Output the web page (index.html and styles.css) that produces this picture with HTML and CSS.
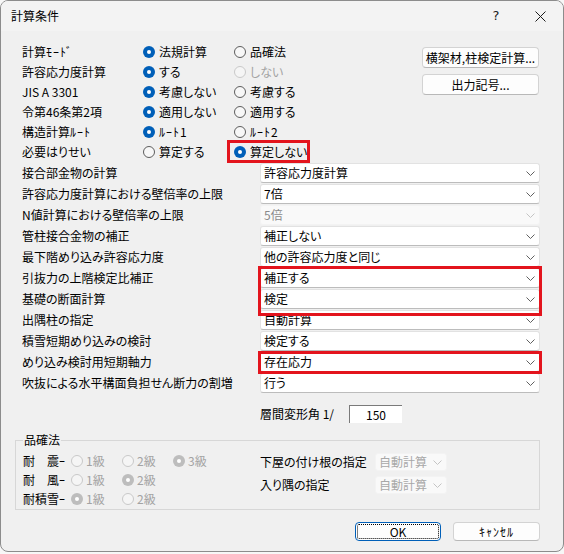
FILE: index.html
```html
<!DOCTYPE html>
<html lang="ja">
<head>
  <meta charset="UTF-8">
  <title>計算条件</title>
  <link rel="stylesheet" href="styles.css">
</head>
<body>

  <div class="dialog">
    <div class="titlebar">
      <span class="title">計算条件</span>
      <span class="caption-btn help">?</span>
      <span class="caption-btn">
        <svg width="11" height="11" viewBox="0 0 11 11"><path d="M0.5 0.5L10.5 10.5M10.5 0.5L0.5 10.5" stroke="#1b1b1b" stroke-width="1" fill="none"/></svg>
      </span>
    </div>

    <div class="content">
      <div class="mode-area">
        <div class="mode-grid">
          <span>計算<span class="hw">ﾓｰﾄﾞ</span></span>
          <span class="radio on"><i></i>法規計算</span>
          <span class="radio"><i></i>品確法</span>

          <span>許容応力度計算</span>
          <span class="radio on"><i></i>する</span>
          <span class="radio off"><i></i>しない</span>

          <span>JIS A 3301</span>
          <span class="radio on"><i></i>考慮しない</span>
          <span class="radio"><i></i>考慮する</span>

          <span>令第46条第2項</span>
          <span class="radio on"><i></i>適用しない</span>
          <span class="radio"><i></i>適用する</span>

          <span>構造計算<span class="hw">ﾙｰﾄ</span></span>
          <span class="radio on"><i></i><span class="hw">ﾙｰﾄ1</span></span>
          <span class="radio"><i></i><span class="hw">ﾙｰﾄ2</span></span>

          <span>必要はりせい</span>
          <span class="radio"><i></i>算定する</span>
          <span class="radio on marked"><i></i>算定しない</span>
        </div>

        <div class="side-buttons">
          <button class="btn">横架材,柱検定計算...</button>
          <button class="btn">出力記号...</button>
        </div>
      </div>

      <div class="combo-grid">
        <span>接合部金物の計算</span>
        <div class="combo">許容応力度計算<svg width="9" height="5" viewBox="0 0 9 5"><path d="M0.5 0.5L4.5 4.5L8.5 0.5" fill="none" stroke="#606060"/></svg></div>

        <span>許容応力度計算における壁倍率の上限</span>
        <div class="combo">7倍<svg width="9" height="5" viewBox="0 0 9 5"><path d="M0.5 0.5L4.5 4.5L8.5 0.5" fill="none" stroke="#606060"/></svg></div>

        <span>N値計算における壁倍率の上限</span>
        <div class="combo off">5倍<svg width="9" height="5" viewBox="0 0 9 5"><path d="M0.5 0.5L4.5 4.5L8.5 0.5" fill="none" stroke="#c4c4c4"/></svg></div>

        <span>管柱接合金物の補正</span>
        <div class="combo">補正しない<svg width="9" height="5" viewBox="0 0 9 5"><path d="M0.5 0.5L4.5 4.5L8.5 0.5" fill="none" stroke="#606060"/></svg></div>

        <span>最下階めり込み許容応力度</span>
        <div class="combo">他の許容応力度と同じ<svg width="9" height="5" viewBox="0 0 9 5"><path d="M0.5 0.5L4.5 4.5L8.5 0.5" fill="none" stroke="#606060"/></svg></div>

        <span>引抜力の上階検定比補正</span>
        <div class="combo mark-pair">補正する<svg width="9" height="5" viewBox="0 0 9 5"><path d="M0.5 0.5L4.5 4.5L8.5 0.5" fill="none" stroke="#606060"/></svg></div>

        <span>基礎の断面計算</span>
        <div class="combo">検定<svg width="9" height="5" viewBox="0 0 9 5"><path d="M0.5 0.5L4.5 4.5L8.5 0.5" fill="none" stroke="#606060"/></svg></div>

        <span>出隅柱の指定</span>
        <div class="combo">自動計算<svg width="9" height="5" viewBox="0 0 9 5"><path d="M0.5 0.5L4.5 4.5L8.5 0.5" fill="none" stroke="#606060"/></svg></div>

        <span>積雪短期めり込みの検討</span>
        <div class="combo">検定する<svg width="9" height="5" viewBox="0 0 9 5"><path d="M0.5 0.5L4.5 4.5L8.5 0.5" fill="none" stroke="#606060"/></svg></div>

        <span>めり込み検討用短期軸力</span>
        <div class="combo mark-one">存在応力<svg width="9" height="5" viewBox="0 0 9 5"><path d="M0.5 0.5L4.5 4.5L8.5 0.5" fill="none" stroke="#606060"/></svg></div>

        <span>吹抜による水平構面負担せん断力の割増</span>
        <div class="combo">行う<svg width="9" height="5" viewBox="0 0 9 5"><path d="M0.5 0.5L4.5 4.5L8.5 0.5" fill="none" stroke="#606060"/></svg></div>
      </div>

      <div class="drift">
        <span class="drift-label">層間変形角 1/</span>
        <input class="drift-input" type="text" value="150">
      </div>

      <fieldset class="group">
        <legend>品確法</legend>
        <div class="group-body">
          <div class="grade-grid">
            <span>耐　震<span class="hw">ｰ</span></span>
            <span class="radio off"><i></i>1級</span>
            <span class="radio off"><i></i>2級</span>
            <span class="radio off on"><i></i>3級</span>

            <span>耐　風<span class="hw">ｰ</span></span>
            <span class="radio off"><i></i>1級</span>
            <span class="radio off on"><i></i>2級</span>
            <span></span>

            <span>耐積雪<span class="hw">ｰ</span></span>
            <span class="radio off on"><i></i>1級</span>
            <span class="radio off"><i></i>2級</span>
            <span></span>
          </div>

          <div class="sub-grid">
            <span>下屋の付け根の指定</span>
            <div class="combo off small">自動計算<svg width="9" height="5" viewBox="0 0 9 5"><path d="M0.5 0.5L4.5 4.5L8.5 0.5" fill="none" stroke="#c4c4c4"/></svg></div>

            <span>入り隅の指定</span>
            <div class="combo off small">自動計算<svg width="9" height="5" viewBox="0 0 9 5"><path d="M0.5 0.5L4.5 4.5L8.5 0.5" fill="none" stroke="#c4c4c4"/></svg></div>
          </div>
        </div>
      </fieldset>

      <div class="actions">
        <button class="btn default ok">OK</button>
        <button class="btn cancel"><span class="hw">ｷｬﾝｾﾙ</span></button>
      </div>
    </div>
  </div>

</body>
</html>
```

FILE: styles.css
```css
* {
  box-sizing: border-box;
}

body {
  margin: 0;
  background-color: #f7f7f7;
  font-family: "Noto Sans CJK JP", "Noto Sans", sans-serif;
  font-size: 12px;
  line-height: 16px;
  color: #000;
  font-feature-settings: "palt";
}

/* half-width katakana: keep them readable and a little wider */
.hw {
  font-feature-settings: normal;
  letter-spacing: 1px;
}

.dialog {
  width: 564px;
  height: 552px;
  background-color: #f0f0f0;
  border: 1px solid #8c8c8c;
  border-radius: 8px;
  overflow: hidden;
}

/* title bar */
.titlebar {
  height: 30px;
  display: flex;
  align-items: center;
  padding-left: 10px;
  background-color: #f3f3f3;
}

.title {
  flex: 1;
}

.caption-btn {
  width: 46px;
  display: flex;
  align-items: center;
  justify-content: center;
  color: #1b1b1b;
}

.help {
  font-family: "DejaVu Sans", sans-serif;
  font-size: 13px;
  padding-left: 4px;
}

.content {
  padding: 0 23px 0 21px;
}

/* radio options */
.mode-area {
  display: flex;
  margin-top: 11px;
}

.mode-grid {
  display: grid;
  grid-template-columns: 121px 91px auto;
  grid-auto-rows: 20px;
  align-items: center;
}

.radio {
  display: inline-flex;
  align-items: center;
  gap: 4px;
  white-space: nowrap;
  justify-self: start;
}

.radio i {
  width: 12px;
  height: 12px;
  border-radius: 50%;
  border: 1px solid #5d5d5d;
  background-color: #f7f7f7;
  display: flex;
  align-items: center;
  justify-content: center;
}

.radio.on i {
  border: none;
  background-color: #005fb8;
}

.radio.on i::after {
  content: "";
  width: 4px;
  height: 4px;
  border-radius: 50%;
  background-color: #fff;
}

.radio.off {
  color: #a3a3a3;
}

.radio.off i {
  border-color: #c9c9c9;
  background-color: #f5f5f5;
}

.radio.off.on i {
  border: none;
  background-color: #bdbdbd;
}

.marked {
  position: relative;
}

.marked::after {
  content: "";
  position: absolute;
  left: -7px;
  right: -3px;
  top: -4px;
  bottom: -3px;
  border: 3px solid #e3141d;
}

/* buttons */
.side-buttons {
  margin-left: auto;
  margin-right: 1px;
  margin-top: 5px;
  width: 117px;
  display: flex;
  flex-direction: column;
  gap: 6px;
}

.btn {
  font: inherit;
  font-feature-settings: "palt";
  color: #000;
  background-color: #fdfdfd;
  border: 1px solid #d3d3d3;
  border-bottom-color: #b8b8b8;
  border-radius: 4px;
  padding: 0;
  height: 21px;
}

.btn.default {
  border: 1px solid #005fb8;
  outline: 1px dotted #000;
  outline-offset: -3px;
}

/* combo rows */
.combo-grid {
  display: grid;
  grid-template-columns: 238px 280px;
  grid-auto-rows: 20px;
  row-gap: 1px;
  align-items: center;
  margin-top: 1px;
}

.combo {
  position: relative;
  height: 20px;
  display: flex;
  align-items: center;
  justify-content: space-between;
  padding: 0 4px 0 3px;
  background-color: #fff;
  border: 1px solid #e2e2e2;
  border-bottom-color: #bcbcbc;
  border-radius: 3px;
}

.combo svg {
  flex: none;
}

.combo.off {
  background-color: #f9f9f9;
  color: #8a8a8a;
  border-color: #f3f3f3;
}

.combo.small {
  height: 18px;
  color: #a8a8a8;
}

.mark-pair,
.mark-one {
  z-index: 1;
}

.mark-pair::after,
.mark-one::after {
  content: "";
  position: absolute;
  left: -3px;
  right: -3px;
  border: 3px solid #e3141d;
}

.mark-pair::after {
  top: -3px;
  height: 44px;
}

.mark-one::after {
  top: -2px;
  bottom: -3px;
}

/* drift angle */
.drift {
  display: flex;
  align-items: center;
  margin-top: 12px;
  padding-left: 238px;
}

.drift-label {
  width: 89px;
}

.drift-input {
  width: 53px;
  height: 18px;
  font: inherit;
  text-align: center;
  padding: 0;
  background-color: #fff;
  border: none;
  border-top: 1px solid #7a7a7a;
  border-left: 1px solid #7a7a7a;
}

/* 品確法 group */
.group {
  margin: 10px 0 0 -7px;
  width: 525px;
  padding: 4px 0 1px 7px;
  border: 1px solid #d7d7d7;
}

.group legend {
  padding: 0 1px;
  line-height: 14px;
}

.group-body {
  display: flex;
}

.grade-grid {
  width: 237px;
  display: grid;
  grid-template-columns: 48px 51px 51px auto;
  grid-auto-rows: 19px;
  align-items: center;
}

.grade-grid .radio {
  gap: 3px;
}

.sub-grid {
  display: grid;
  grid-template-columns: 115px 72px;
  grid-auto-rows: 18px;
  row-gap: 5px;
  align-items: center;
  margin-top: 2px;
}

/* dialog buttons */
.actions {
  display: flex;
  justify-content: flex-end;
  gap: 12px;
  margin-top: 12px;
}

.actions .btn {
  height: 19px;
}

.ok {
  width: 86px;
}

.cancel {
  width: 87px;
}
```
